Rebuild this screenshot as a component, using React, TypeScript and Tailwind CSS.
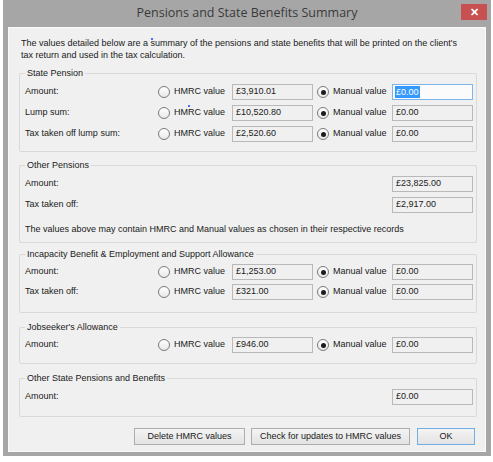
import React from 'react';

type RowProps = {
  label: string;
  hmrc?: string;
  manual?: string;
  only?: string;
  focused?: boolean;
  dot?: boolean;
  className?: string;
};

function Radio({ checked }: { checked?: boolean }) {
  return (
    <span className="flex h-[12px] w-[12px] shrink-0 items-center justify-center rounded-full border border-[#7a7a7a] bg-linear-to-b from-[#ffffff] to-[#e8e8e8]">
      {checked && <span className="h-[5px] w-[5px] rounded-full bg-[#1c1c1c]" />}
    </span>
  );
}

function Field({ value, focused }: { value: string; focused?: boolean }) {
  return (
    <div
      className={
        focused
          ? 'flex h-[16px] w-[81px] items-center border border-[#7eb4ea] bg-[#fbfbfb] pl-[2px]'
          : 'flex h-[16px] w-[81px] items-center border border-[#b9b9b9] bg-[#f0f0f0] pl-[3px]'
      }
    >
      {focused ? <span className="bg-[#3399ff] px-[1px] leading-[12px] text-white">{value}</span> : value}
    </div>
  );
}

function Row({ label, hmrc, manual, only, focused, dot, className }: RowProps) {
  return (
    <div className={'flex h-[16px] items-center ' + (className || '')}>
      <span className="flex-1 pl-[5px]">{label}</span>
      {only !== undefined ? (
        <Field value={only} />
      ) : (
        <>
          <label className="relative flex w-[74px] items-center gap-[4px]">
            <Radio />
            <span>HMRC value</span>
            {dot && <span className="absolute left-[30px] top-[-1px] h-[2px] w-[2px] rounded-full bg-[#1f3cff]" />}
          </label>
          <Field value={hmrc || ''} />
          <label className="ml-[4px] flex w-[75px] items-center gap-[4px]">
            <Radio checked />
            <span>Manual value</span>
          </label>
          <Field value={manual || ''} focused={focused} />
        </>
      )}
    </div>
  );
}

function Group({ title, className, children }: { title: string; className: string; children: React.ReactNode }) {
  return (
    <div className={'relative rounded-[2px] border border-[#d9d9d9] pr-[3px] ' + className}>
      <span className="absolute left-[5px] top-[-7px] bg-[#f0f0f0] px-[2px] leading-[12px]">{title}</span>
      {children}
    </div>
  );
}

function Button({ children, width, primary }: { children: React.ReactNode; width: string; primary?: boolean }) {
  return (
    <button
      className={
        'flex h-[17px] items-center justify-center bg-linear-to-b from-[#f4f4f4] to-[#e3e3e3] text-[#1a1a1a] ' +
        width +
        (primary ? ' border border-[#72aee6]' : ' border border-[#adadad]')
      }
    >
      {children}
    </button>
  );
}

export default function App() {
  return (
    <div className="h-[462px] w-[493px] bg-white pl-[3px] font-['Liberation_Sans',Arial,sans-serif] text-[9px] text-[#1a1a1a]">
      <div className="flex h-[456px] w-[488px] flex-col bg-[#a6a6a6] px-[5px] pb-[4px]">
        {/* Title bar */}
        <div className="relative flex h-[27px] items-center justify-center">
          <span className="font-['Open_Sans',sans-serif] text-[12.5px] text-[#3a3a3a]">Pensions and State Benefits Summary</span>
          <span className="absolute right-[-1px] top-[4px] flex h-[16px] w-[26px] items-center justify-center bg-[#c75050] text-[11px] font-bold text-white">
            ✕
          </span>
        </div>

        {/* Body */}
        <div className="flex flex-1 flex-col border border-[#fafafa] bg-[#f0f0f0] pl-[10px] pr-[8px] pt-[9px]">
          <p className="relative pl-[2px] leading-[12px]">
            The values detailed below are a summary of the pensions and state benefits that will be printed on the client's
            <br />
            tax return and used in the tax calculation.
            <span className="absolute left-[132px] top-[1px] h-[2px] w-[2px] rounded-full bg-[#1f3cff]" />
          </p>

          <Group title="State Pension" className="mt-[12px] pb-[9px] pt-[10px]">
            <Row label="Amount:" hmrc="£3,910.01" manual="£0.00" focused />
            <Row label="Lump sum:" hmrc="£10,520.80" manual="£0.00" dot className="mt-[5px]" />
            <Row label="Tax taken off lump sum:" hmrc="£2,520.60" manual="£0.00" className="mt-[5px]" />
          </Group>

          <Group title="Other Pensions" className="mt-[13px] pb-[6px] pt-[10px]">
            <Row label="Amount:" only="£23,825.00" />
            <Row label="Tax taken off:" only="£2,917.00" className="mt-[5px]" />
            <p className="mt-[10px] pl-[5px] leading-[13px]">
              The values above may contain HMRC and Manual values as chosen in their respective records
            </p>
          </Group>

          <Group title="Incapacity Benefit & Employment and Support Allowance" className="mt-[11px] pb-[12px] pt-[9px]">
            <Row label="Amount:" hmrc="£1,253.00" manual="£0.00" />
            <Row label="Tax taken off:" hmrc="£321.00" manual="£0.00" className="mt-[4px]" />
          </Group>

          <Group title="Jobseeker's Allowance" className="mt-[14px] pb-[10px] pt-[9px]">
            <Row label="Amount:" hmrc="£946.00" manual="£0.00" />
          </Group>

          <Group title="Other State Pensions and Benefits" className="mt-[14px] pb-[11px] pt-[10px]">
            <Row label="Amount:" only="£0.00" />
          </Group>

          <div className="mt-[11px] flex justify-end gap-[6px] pr-[2px]">
            <Button width="w-[111px]">Delete HMRC values</Button>
            <Button width="w-[159px] mr-[1px]">Check for updates to HMRC values</Button>
            <Button width="w-[58px]" primary>
              OK
            </Button>
          </div>
        </div>
      </div>
    </div>
  );
}
